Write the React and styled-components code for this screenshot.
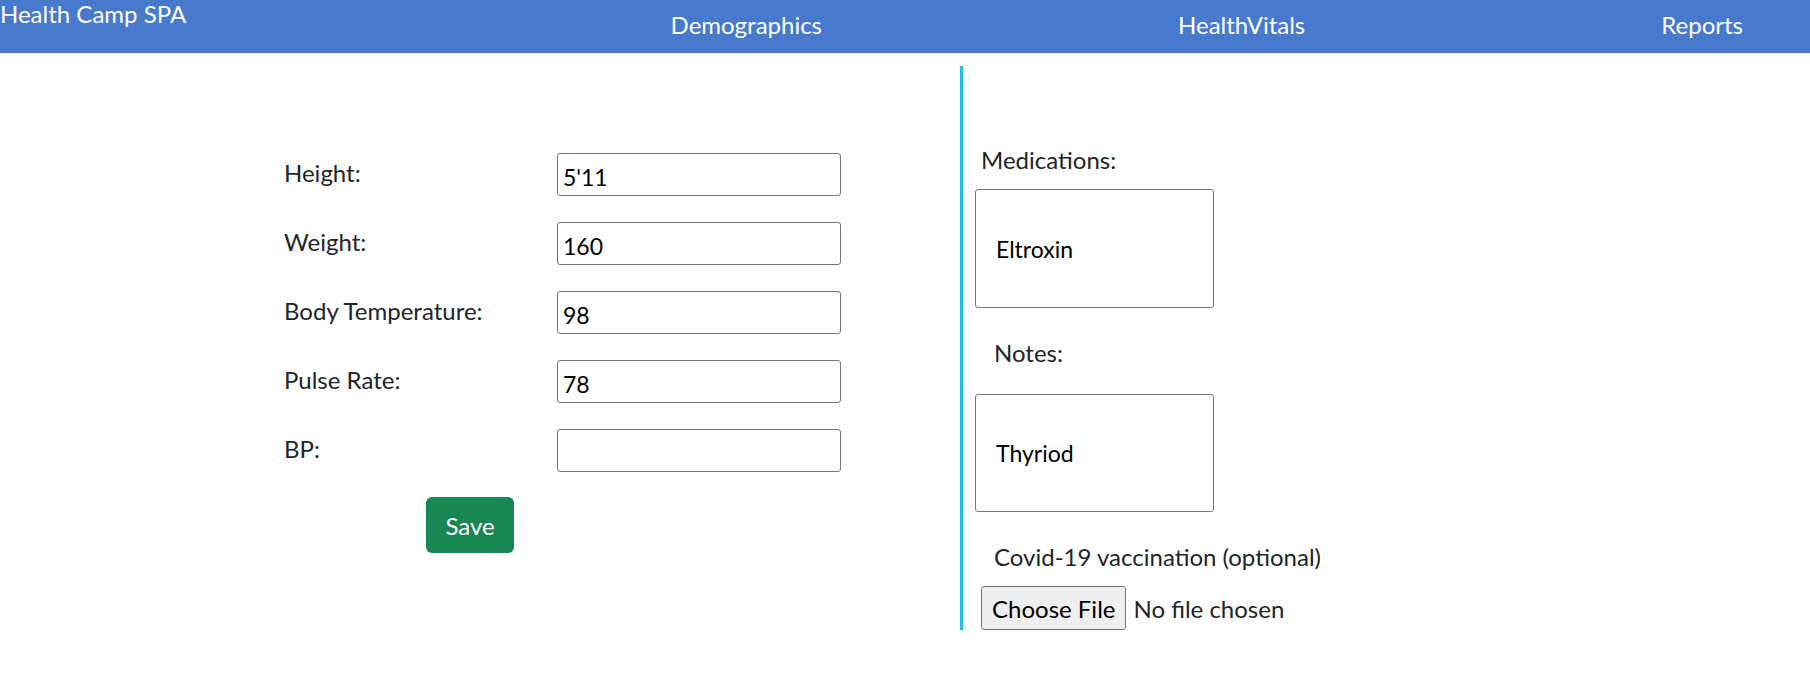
import React from 'react';
import styled, { createGlobalStyle } from 'styled-components';

const GlobalStyle = createGlobalStyle`
  * { box-sizing: border-box; }
  body {
    margin: 0;
    background: #fff;
    font-family: Lato, "Open Sans", sans-serif;
    color: #212529;
  }
`;

const NavBar = styled.nav`
  display: flex;
  height: 53px;
  background-color: #4779cc;
  color: #fff;
`;

const Brand = styled.div`
  align-self: flex-start;
  font-size: 24px;
  line-height: 27px;
`;

const NavLinks = styled.ul`
  display: flex;
  align-items: center;
  gap: 356px;
  list-style: none;
  margin: 0 0 0 auto;
  padding: 0 67px 0 0;
`;

const NavLink = styled.li`
  font-size: 24px;
  padding-bottom: 5px;
  cursor: pointer;
`;

const Page = styled.main`
  display: flex;
  align-items: flex-start;
`;

const VitalsColumn = styled.section`
  flex: 0 0 960px;
  padding: 100px 0 0 284px;
`;

const VitalsGrid = styled.div`
  display: grid;
  grid-template-columns: 273px 284px;
  grid-auto-rows: 43px;
  row-gap: 26px;
  align-items: center;
`;

const FieldLabel = styled.label`
  font-size: 24px;
  margin-top: -4px;
`;

const TextField = styled.input`
  width: 284px;
  height: 43px;
  padding: 4px 5px 0;
  border: 1px solid #767676;
  border-radius: 3px;
  font-family: inherit;
  font-size: 23px;
  color: #000;
`;

const SaveButton = styled.button`
  margin: 25px 0 0 142px;
  width: 88px;
  height: 56px;
  border: none;
  border-radius: 6px;
  background-color: #198754;
  color: #fff;
  font-family: inherit;
  font-size: 24px;
  cursor: pointer;
`;

const NotesColumn = styled.section`
  display: flex;
  flex-direction: column;
  align-items: flex-start;
  margin-top: 13px;
  padding-left: 12px;
  border-left: 3px solid #1fc1e3;
`;

const SideLabel = styled.label`
  font-size: 24px;
  line-height: 30px;
  margin-top: ${p => p.$top}px;
  margin-left: ${p => p.$indent}px;
`;

const BigField = styled.input`
  width: 239px;
  height: ${p => p.$height}px;
  margin-top: ${p => p.$top}px;
  padding: 0 20px;
  border: 1px solid #767676;
  border-radius: 3px;
  font-family: inherit;
  font-size: 23px;
  color: #000;
`;

const FileField = styled.input`
  margin: 14px 0 0 6px;
  font-family: inherit;
  font-size: 24px;
  color: #212529;

  &::file-selector-button {
    height: 44px;
    margin-right: 7px;
    padding: 0 10px;
    border: 1px solid #767676;
    border-radius: 3px;
    background-color: #efefef;
    font-family: inherit;
    font-size: 24px;
    color: #000;
  }
`;

const vitals = [
  { id: 'height', label: 'Height:', value: "5'11" },
  { id: 'weight', label: 'Weight:', value: '160' },
  { id: 'temp', label: 'Body Temperature:', value: '98' },
  { id: 'pulse', label: 'Pulse Rate:', value: '78' },
  { id: 'bp', label: 'BP:', value: '' },
];

const App = () => {
  return (
    <>
      <GlobalStyle />
      <NavBar>
        <Brand>Health Camp SPA</Brand>
        <NavLinks>
          <NavLink>Demographics</NavLink>
          <NavLink>HealthVitals</NavLink>
          <NavLink>Reports</NavLink>
        </NavLinks>
      </NavBar>
      <Page>
        <VitalsColumn>
          <VitalsGrid>
            {vitals.map(v => (
              <React.Fragment key={v.id}>
                <FieldLabel htmlFor={v.id}>{v.label}</FieldLabel>
                <TextField id={v.id} defaultValue={v.value} />
              </React.Fragment>
            ))}
          </VitalsGrid>
          <SaveButton>Save</SaveButton>
        </VitalsColumn>
        <NotesColumn>
          <SideLabel $top={79} $indent={6}>Medications:</SideLabel>
          <BigField $top={14} $height={119} defaultValue="Eltroxin" />
          <SideLabel $top={30} $indent={19}>Notes:</SideLabel>
          <BigField $top={26} $height={118} defaultValue="Thyriod" />
          <SideLabel $top={30} $indent={19}>Covid-19 vaccination (optional)</SideLabel>
          <FileField type="file" />
        </NotesColumn>
      </Page>
    </>
  );
};

export default App;
